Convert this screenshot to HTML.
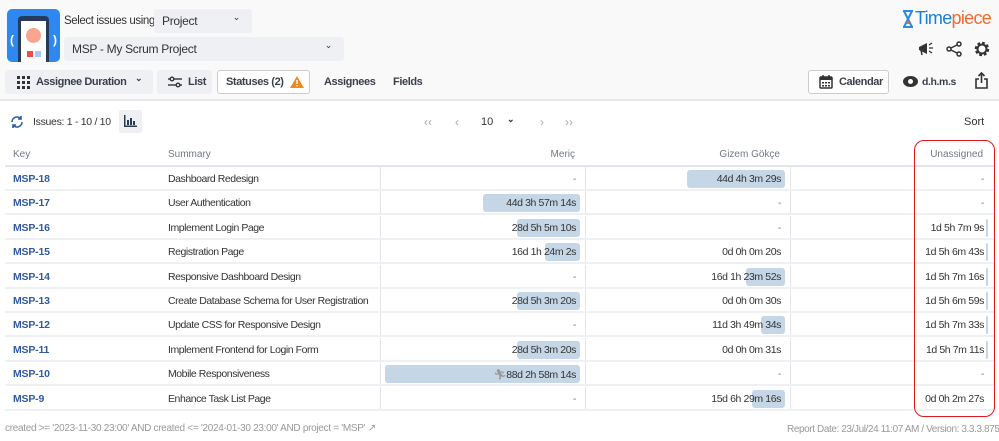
<!DOCTYPE html>
<html><head><meta charset="utf-8"><style>
*{box-sizing:border-box;margin:0;padding:0}
body{width:999px;height:441px;overflow:hidden;background:#fff;font-family:"Liberation Sans",sans-serif;color:#333;position:relative}
.a{position:absolute;white-space:nowrap}
.hdr{position:absolute;left:0;top:0;width:999px;height:101px;background:#f9f9fa;border-bottom:2px solid #e8e8ec}
.btn{position:absolute;background:#eef0f3;border-radius:3px;font-size:12px;color:#333;display:flex;align-items:center;white-space:nowrap;letter-spacing:-0.3px}
.bb{font-weight:bold;font-size:11px;letter-spacing:-0.4px;color:#3a3f4a}
.row{position:absolute;left:0;width:994px;height:24px}
.row:after{content:"";position:absolute;left:5px;right:0;bottom:0;height:2px;background:#eef0f4}
.k{position:absolute;left:13px;top:6px;font-size:10.5px;font-weight:bold;color:#2f5aa0;letter-spacing:-0.2px}
.s{position:absolute;left:168px;top:6px;font-size:10.5px;color:#333;letter-spacing:-0.45px;white-space:nowrap}
.c{position:absolute;top:0;height:22px;border-left:1px solid #e4e4e8}
.v{position:absolute;top:6px;font-size:10.5px;color:#333;text-align:right;letter-spacing:-0.4px;white-space:nowrap}
.bar{position:absolute;top:3px;height:18px;background:#c5d6e6;border-radius:3px}
</style></head><body>
<div class="hdr"></div>
<div class="a" style="left:7px;top:9px;width:53px;height:53px;background:#2f88f0;border-radius:5px;overflow:hidden">
 <div style="position:absolute;left:11px;top:7px;width:31px;height:50px;background:#263b5c;border-radius:4px"></div>
 <div style="position:absolute;left:14px;top:12px;width:25px;height:45px;background:#fff"></div>
 <div style="position:absolute;left:19px;top:19px;width:15px;height:15px;background:#f7a58e;border-radius:50%"></div>
 <div style="position:absolute;left:20px;top:42px;width:6px;height:6px;background:#f04a4a"></div>
 <div style="position:absolute;left:28px;top:42px;width:6px;height:6px;background:#aac8f5"></div>
 <div style="position:absolute;left:3px;top:24px;color:#fff;font-size:12px;font-weight:bold">(</div>
 <div style="position:absolute;left:46px;top:24px;color:#fff;font-size:12px;font-weight:bold">)</div>
</div>
<div class="a" style="left:64px;top:15px;font-size:11.5px;letter-spacing:-0.4px">Select issues using</div>
<div class="btn" style="left:154px;top:9px;width:98px;height:24px;padding-left:8px">Project<span style="position:absolute;right:12px;top:3px;font-size:9px">&#8964;</span></div>
<div class="btn" style="left:64px;top:37px;width:280px;height:24px;padding-left:8px">MSP - My Scrum Project<span style="position:absolute;right:12px;top:3px;font-size:9px">&#8964;</span></div>
<div class="btn bb" style="left:5px;top:70px;width:148px;height:24px;padding-left:12px">
<svg width="13" height="13" viewBox="0 0 13 13" fill="#333"><rect x="0" y="0" width="3" height="3"/><rect x="5" y="0" width="3" height="3"/><rect x="10" y="0" width="3" height="3"/><rect x="0" y="5" width="3" height="3"/><rect x="5" y="5" width="3" height="3"/><rect x="10" y="5" width="3" height="3"/><rect x="0" y="10" width="3" height="3"/><rect x="5" y="10" width="3" height="3"/><rect x="10" y="10" width="3" height="3"/></svg>
<span style="margin-left:6px">Assignee Duration</span><span style="position:absolute;left:130px;top:3px;font-size:9px">&#8964;</span></div>
<div class="btn bb" style="left:157px;top:70px;width:55px;height:24px;padding-left:11px">
<svg width="14" height="12" viewBox="0 0 14 12" stroke="#333" stroke-width="1.4" fill="none"><line x1="0" y1="3" x2="14" y2="3"/><line x1="0" y1="9" x2="14" y2="9"/><circle cx="4" cy="3" r="1.8" fill="#eef0f3"/><circle cx="10" cy="9" r="1.8" fill="#eef0f3"/></svg><span style="margin-left:6px">List</span></div>
<div class="btn bb" style="left:217px;top:70px;width:93px;height:24px;padding-left:8px;background:#fff;border:1px solid #ccc">Statuses (2)<svg style="margin-left:6px" width="14" height="12" viewBox="0 0 14 12"><path d="M7 0L14 12H0Z" fill="#f08a1c"/><rect x="6.3" y="4" width="1.4" height="4" fill="#fff"/><rect x="6.3" y="9" width="1.4" height="1.4" fill="#fff"/></svg></div>
<div class="a bb" style="left:324px;top:76px">Assignees</div>
<div class="a bb" style="left:393px;top:76px">Fields</div>
<div class="a" style="left:902px;top:10px;width:12px;height:18px">
<svg width="12" height="18" viewBox="0 0 12 18"><path d="M1 1H11M1 17H11M2 1L10 17M10 1L2 17" stroke="#2a8be0" stroke-width="2" fill="none"/><path d="M4 14L8 14L6 10Z" fill="#f26b2a"/></svg></div>
<div class="a" style="left:915px;top:8px;font-size:18px;letter-spacing:-0.7px"><span style="color:#1a7fd4">Time</span><span style="color:#f26b2a">piece</span></div>
<svg class="a" style="left:918px;top:42px" width="16" height="14" viewBox="0 0 16 14"><path d="M1 5L9 1V12L1 8Z" fill="#333"/><path d="M3 8L4 13" stroke="#333" stroke-width="1.5"/><path d="M11 3L14 1M11 6H15M11 9L14 11" stroke="#333" stroke-width="1.3"/></svg>
<svg class="a" style="left:946px;top:41px" width="16" height="16" viewBox="0 0 16 16" fill="none" stroke="#333" stroke-width="1.5"><circle cx="3" cy="8" r="2"/><circle cx="13" cy="3" r="2"/><circle cx="13" cy="13" r="2"/><path d="M5 7L11 4M5 9L11 12"/></svg>
<svg class="a" style="left:974px;top:41px" width="16" height="16" viewBox="0 0 16 16"><circle cx="8" cy="8" r="5.5" fill="none" stroke="#333" stroke-width="3.5" stroke-dasharray="2.5 1.8"/><circle cx="8" cy="8" r="4.5" fill="none" stroke="#333" stroke-width="2"/></svg>
<div class="btn bb" style="left:808px;top:70px;width:81px;height:24px;padding-left:10px;background:#fff;border:1px solid #ccc">
<svg width="14" height="14" viewBox="0 0 14 14"><rect x="1" y="2" width="12" height="11" rx="1" fill="none" stroke="#333" stroke-width="1.5"/><rect x="1" y="2" width="12" height="3" fill="#333"/><path d="M4 0V3M10 0V3" stroke="#333" stroke-width="1.5"/><g fill="#333"><rect x="3" y="7" width="2" height="1.5"/><rect x="6" y="7" width="2" height="1.5"/><rect x="9" y="7" width="2" height="1.5"/><rect x="3" y="10" width="2" height="1.5"/><rect x="6" y="10" width="2" height="1.5"/><rect x="9" y="10" width="2" height="1.5"/></g></svg><span style="margin-left:6px">Calendar</span></div>
<svg class="a" style="left:903px;top:76px" width="15" height="11" viewBox="0 0 15 11"><ellipse cx="7.5" cy="5.5" rx="7.5" ry="5.5" fill="#333"/><circle cx="7.5" cy="5.5" r="2.5" fill="#fff"/></svg>
<div class="a bb" style="left:922px;top:76px;font-size:10.5px">d.h.m.s</div>
<svg class="a" style="left:975px;top:72px" width="13" height="17" viewBox="0 0 13 17" fill="none" stroke="#333" stroke-width="1.6"><path d="M4 7H1V16H12V7H9"/><path d="M6.5 11V1M3.5 4L6.5 1L9.5 4"/></svg>
<svg class="a" style="left:10px;top:115px" width="14" height="14" viewBox="0 0 14 14" fill="none" stroke="#2f5aa0" stroke-width="1.6"><path d="M2 7A5 5 0 0 1 11 4M12 7A5 5 0 0 1 3 10"/><path d="M11 1V4H8M3 13V10H6"/></svg>
<div class="a" style="left:33px;top:116px;font-size:10.5px;letter-spacing:-0.3px">Issues: 1 - 10 / 10</div>
<div class="a" style="left:119px;top:110px;width:23px;height:23px;background:#eef0f3;border-radius:2px"><svg style="margin:5px" width="13" height="12" viewBox="0 0 13 12" fill="#2a3a50"><rect x="0" y="0" width="1.5" height="12"/><rect x="0" y="10.5" width="13" height="1.5"/><rect x="3" y="5" width="2" height="5"/><rect x="6" y="3" width="2" height="7"/><rect x="9" y="6" width="2" height="4"/></svg></div>
<div class="a" style="left:424px;top:115px;font-size:12px;color:#aaa">&lsaquo;&lsaquo;</div>
<div class="a" style="left:455px;top:115px;font-size:12px;color:#aaa">&lsaquo;</div>
<div class="a" style="left:481px;top:116px;font-size:11px">10</div>
<div class="a" style="left:507px;top:114px;font-size:9px;font-weight:bold">&#8964;</div>
<div class="a" style="left:540px;top:115px;font-size:12px;color:#aaa">&rsaquo;</div>
<div class="a" style="left:565px;top:115px;font-size:12px;color:#aaa">&rsaquo;&rsaquo;</div>
<div class="a" style="left:964px;top:116px;font-size:11px">Sort</div>
<div class="a" style="left:5px;top:142px;width:989px;height:25px;border-bottom:2px solid #e4e4ec"></div>
<div class="a" style="left:13px;top:149px;font-size:10px;color:#707a86">Key</div>
<div class="a" style="left:168px;top:149px;font-size:10px;color:#707a86">Summary</div>
<div class="a" style="left:480px;top:149px;width:95px;text-align:right;font-size:10px;color:#707a86">Meriç</div>
<div class="a" style="left:680px;top:149px;width:100px;text-align:right;font-size:10px;color:#707a86">Gizem Gökçe</div>
<div class="a" style="left:883px;top:149px;width:100px;text-align:right;font-size:10px;color:#707a86">Unassigned</div>
<div id="rows"></div>
<div class="a" style="left:914px;top:140px;width:81px;height:277px;border:1.5px solid #e0191e;border-radius:10px"></div>
<div class="a" style="left:5px;top:423px;font-size:10px;color:#999;letter-spacing:-0.3px">created &gt;= '2023-11-30 23:00' AND created &lt;= '2024-01-30 23:00' AND project = 'MSP' &#x2197;</div>
<div class="a" style="left:787px;top:424px;font-size:10px;color:#999;letter-spacing:-0.4px">Report Date: 23/Jul/24 11:07 AM / Version: 3.3.3.875</div>
<script>
var d=[["MSP-18","Dashboard Redesign","-",0,"44d 4h 3m 29s",98,"-",0],
["MSP-17","User Authentication","44d 3h 57m 14s",97,"-",0,"-",0],
["MSP-16","Implement Login Page","28d 5h 5m 10s",63,"-",0,"1d 5h 7m 9s",2],
["MSP-15","Registration Page","16d 1h 24m 2s",35,"0d 0h 0m 20s",0,"1d 5h 6m 43s",2],
["MSP-14","Responsive Dashboard Design","-",0,"16d 1h 23m 52s",39,"1d 5h 7m 16s",2],
["MSP-13","Create Database Schema for User Registration","28d 5h 3m 20s",63,"0d 0h 0m 30s",0,"1d 5h 6m 59s",2],
["MSP-12","Update CSS for Responsive Design","-",0,"11d 3h 49m 34s",24,"1d 5h 7m 33s",2],
["MSP-11","Implement Frontend for Login Form","28d 5h 3m 20s",63,"0d 0h 0m 31s",0,"1d 5h 7m 11s",2],
["MSP-10","Mobile Responsiveness","<span style='color:#999'>&#x1F3C3;&#xFE0E;</span>88d 2h 58m 14s",195,"-",0,"-",0],
["MSP-9","Enhance Task List Page","-",0,"15d 6h 29m 16s",33,"0d 0h 2m 27s",0]];
var tops=[167,191,216,240,265,289,313,338,362,387],h="";
d.forEach(function(r,i){
 h+='<div class="row" style="top:'+tops[i]+'px"><div class="k">'+r[0]+'</div><div class="s">'+r[1]+'</div>';
 [[380,580,2],[585,785,4],[790,988,6]].forEach(function(c){
  h+='<div class="c" style="left:'+c[0]+'px;width:'+(c[1]-c[0]+5)+'px"></div>';
  var w=r[c[2]+1];
  if(w)h+='<div class="bar" style="left:'+(c[1]-w)+'px;width:'+w+'px"></div>';
  var v=r[c[2]],dash=v=="-";
  h+='<div class="v" style="left:'+(c[0]+2)+'px;width:'+(c[1]-c[0]-6)+'px;'+(dash?'color:#777':'')+'">'+v+'</div>';
 });
 h+='</div>';
});
document.getElementById('rows').innerHTML=h;
</script>
</body></html>
